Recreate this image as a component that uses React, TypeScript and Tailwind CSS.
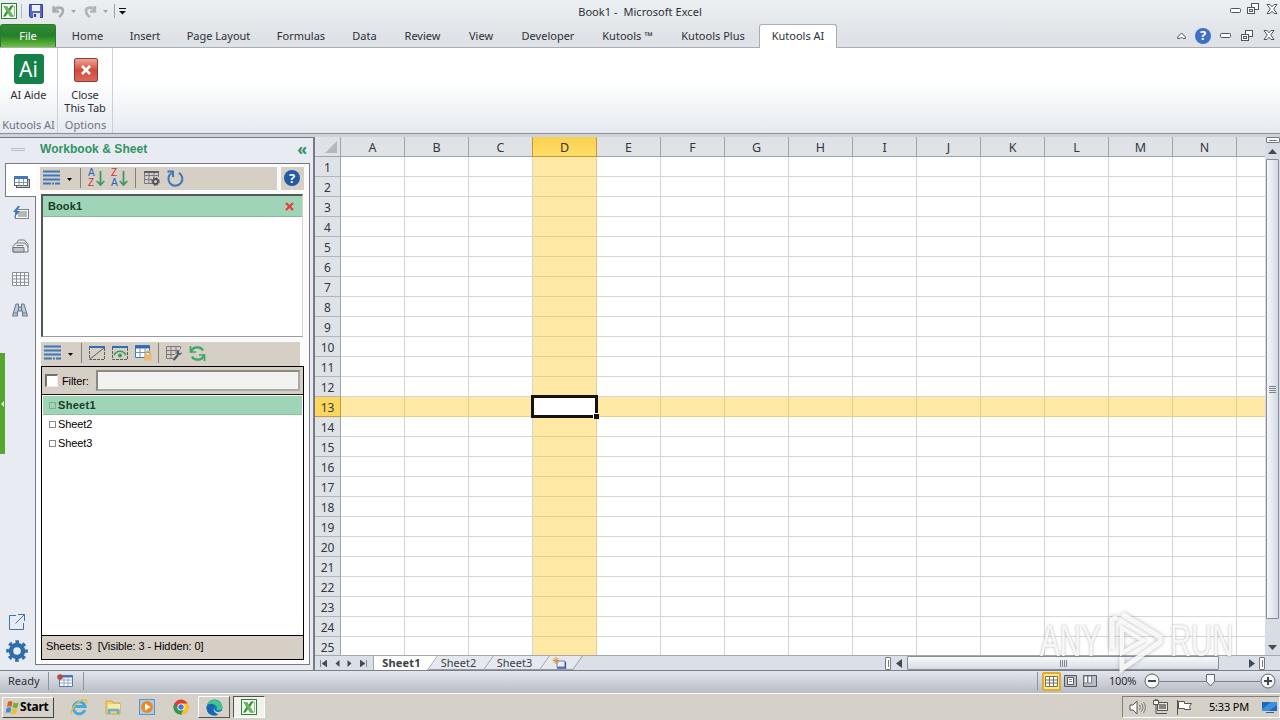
import type { ReactNode } from "react";
import clsx from "clsx";

const TABS = [
  { label: "Home", width: "w-[59px]" },
  { label: "Insert", width: "w-[56px]" },
  { label: "Page Layout", width: "w-[91px]" },
  { label: "Formulas", width: "w-[74px]" },
  { label: "Data", width: "w-[53px]" },
  { label: "Review", width: "w-[63px]" },
  { label: "View", width: "w-[54px]" },
  { label: "Developer", width: "w-[80px]" },
  { label: "Kutools ™", width: "w-[79px]" },
  { label: "Kutools Plus", width: "w-[92px]" },
  { label: "Kutools AI", width: "w-[78px]", active: true },
];

const COLUMNS = "ABCDEFGHIJKLMN".split("");
const ROWS = Array.from({ length: 25 }, (_, i) => i + 1);
const ACTIVE_COL = "D";
const ACTIVE_ROW = 13;

type IconProps = {
  w: number;
  h: number;
  className?: string;
  children: ReactNode;
};

function Icon({ w, h, className, children }: IconProps) {
  return (
    <svg
      width={w}
      height={h}
      viewBox={`0 0 ${w} ${h}`}
      fill="none"
      className={clsx("shrink-0", className)}
    >
      {children}
    </svg>
  );
}

function ExcelIcon() {
  return (
    <Icon w={16} h={16}>
      <rect x=".5" y=".5" width="15" height="15" fill="#f4faf0" stroke="#2f7d3a" />
      <path d="M11 3h2.500v10H11" stroke="#8ebf86" />
      <path d="M2.500 3H6l1.500 3L10 2.500h2.500L9 8l3.500 5.500H9L7 10l-2.500 3.500H2L5.500 8z" fill="#2f8d3b" />
      <path d="M2.500 3H6l6.500 10.500H9z" fill="#6cb75c" />
    </Icon>
  );
}

function Caret({ className }: { className?: string }) {
  return (
    <Icon w={5} h={3} className={className}>
      <path d="M0 0h5L2.500 3z" fill="currentColor" />
    </Icon>
  );
}

function MinimizeIcon() {
  return (
    <Icon w={11} h={6}>
      <rect x=".5" y=".5" width="10" height="4" rx="1" fill="#fff" stroke="#50565e" />
    </Icon>
  );
}

function RestoreIcon() {
  return (
    <Icon w={13} h={12}>
      <rect x="4.500" y=".5" width="7" height="6" fill="#fff" stroke="#50565e" />
      <rect x=".5" y="4.500" width="7" height="6" fill="#fff" stroke="#50565e" />
      <rect x="2.500" y="6.500" width="3" height="2" stroke="#50565e" />
    </Icon>
  );
}

function CloseIcon() {
  return (
    <Icon w={12} h={10}>
      <path
        d="M1 .5h3l2 2.300L8 .5h3L7.700 5 11 9.500H8L6 7.200 4 9.500H1L4.300 5z"
        fill="#fff"
        stroke="#50565e"
      />
    </Icon>
  );
}

function TitleBar() {
  return (
    <div className="flex h-6 shrink-0">
      <div className="flex w-[560px] items-center pb-0.5 pl-[1px]">
        <ExcelIcon />
        <div className="ml-1 h-3.5 w-px bg-[#b4b8bd]" />
        <Icon w={14} h={14} className="ml-[7px]">
          <path d="M.5.5h13v13h-12l-1-1z" fill="#5a66c4" stroke="#323c93" />
          <rect x="3" y="1" width="8" height="6" fill="#eef3fb" />
          <rect x="4" y="9" width="7" height="5" fill="#dfe4f0" />
          <rect x="5" y="10" width="2" height="3" fill="#323c93" />
        </Icon>
        <Icon w={13} h={13} className="ml-[9px]">
          <path d="M1.500 1v5.500H7" stroke="#a9adb3" strokeWidth="2.400" />
          <path d="M2 6c2-5 9-4 9 0 0 3-2 4-4 6" stroke="#a9adb3" strokeWidth="2.600" />
        </Icon>
        <Caret className="ml-1.5 text-[#a0a4aa]" />
        <Icon w={13} h={13} className="ml-[8px]">
          <path d="M11 1v5.500H6" stroke="#b1b5ba" strokeWidth="2.400" />
          <path d="M10.500 6C9 1 2 2 2 6c0 3 1 4 4 6" stroke="#b1b5ba" strokeWidth="2.600" />
        </Icon>
        <Caret className="ml-[6px] text-[#a0a4aa]" />
        <div className="ml-[6px] h-3.5 w-px bg-[#9da1a6]" />
        <Icon w={7} h={7} className="ml-[4px]">
          <path d="M0 .5h7" stroke="#111" />
          <path d="M0 3h7L3.500 6.500z" fill="#111" />
        </Icon>
      </div>
      <div className="w-[160px] text-center text-[11px] leading-6 tracking-[0.05px] whitespace-pre">
        {"Book1 -  Microsoft Excel"}
      </div>
      <div className="flex flex-1 items-start justify-end pr-[2px]">
        <div className="mt-2 mr-[6px]">
          <MinimizeIcon />
        </div>
        <div className="mt-[3px] mr-[6px]">
          <RestoreIcon />
        </div>
        <div className="mt-1">
          <CloseIcon />
        </div>
      </div>
    </div>
  );
}

function TabStrip() {
  return (
    <div className="flex h-6 shrink-0 border-b border-[#a9adb4] text-[11px]">
      <div className="mr-0.5 h-[23px] w-14 rounded-t-[3px] border border-b-0 border-[#2b7a2b] bg-gradient-to-b from-[#2f8c33] via-[#23802a] to-[#6cc43c] text-center leading-[22px] text-white">
        File
      </div>
      {TABS.map((tab) => (
        <div
          key={tab.label}
          className={clsx(
            "text-center leading-6 whitespace-nowrap",
            tab.width,
            tab.active &&
              "h-6 rounded-t-[3px] border border-b-0 border-[#a9adb4] bg-white leading-[22px]",
          )}
        >
          {tab.label}
        </div>
      ))}
      <div className="flex flex-1 items-center justify-end pr-[5px]">
        <Icon w={9} h={8} className="mr-[9px]">
          <path d="M.7 5 4.500 1l3.800 4v1.500H6L4.500 5 3 6.500H.7z" fill="#fff" stroke="#50565e" />
        </Icon>
        <div className="mr-[9px] flex size-4 items-center justify-center rounded-full bg-[#3f70c5] text-[13px] leading-none font-bold text-white">
          ?
        </div>
        <MinimizeIcon />
        <div className="ml-[10px]">
          <RestoreIcon />
        </div>
        <div className="ml-[9px] pb-0.5">
          <CloseIcon />
        </div>
      </div>
    </div>
  );
}

function Ribbon() {
  return (
    <div className="flex h-[86px] shrink-0 border-b border-[#8a8e95] bg-gradient-to-b from-white from-40% to-[#e6eaf0] text-[11px] leading-[13px]">
      <div className="flex w-[58px] flex-col items-center border-r border-[#cbd0d7] pt-1.5">
        <div className="flex size-[30px] items-center justify-center rounded-[3px] bg-[#15814a] text-[21px] leading-none text-white">
          Ai
        </div>
        <div className="mt-[4px] tracking-[-0.1px]">AI Aide</div>
        <div className="mt-auto mb-0.5 text-[#6b727c] whitespace-nowrap">Kutools AI</div>
      </div>
      <div className="flex w-[55px] flex-col items-center border-r border-[#cbd0d7] pt-2.5">
        <div className="ml-px flex size-6 items-center justify-center rounded-[2px] border border-[#8f3a32] bg-gradient-to-b from-[#eca59b] via-[#cf4b3c] to-[#d9695b]">
          <Icon w={12} h={12}>
            <path d="m2 2 8 8m0-8-8 8" stroke="#fff" strokeWidth="2.600" />
          </Icon>
        </div>
        <div className="mt-[6px] text-center tracking-[-0.1px] whitespace-nowrap">
          Close
          <br />
          This Tab
        </div>
        <div className="mt-auto mb-0.5 ml-px tracking-[0.1px] text-[#6b727c]">Options</div>
      </div>
    </div>
  );
}

function ListIcon() {
  return (
    <Icon w={17} h={16}>
      <path d="M0 1.500h17M0 5.500h17M0 9.500h17" stroke="#3f78b5" strokeWidth="2" />
      <path d="M0 13.500h17" stroke="#3f78b5" strokeWidth="2" strokeDasharray="8 1 2 1" />
    </Icon>
  );
}

function SortIcon({ top, bottom }: { top: string; bottom: string }) {
  const color = (letter: string) =>
    letter === "A" ? "text-[#2266bd]" : "text-[#d3302b]";
  return (
    <div className="flex items-center">
      <div className="w-[8px] font-['Liberation_Sans',Arial,sans-serif] text-[10px] leading-[10px]">
        <div className={color(top)}>{top}</div>
        <div className={color(bottom)}>{bottom}</div>
      </div>
      <Icon w={9} h={17}>
        <path d="M4.500 1v14M.8 11l3.700 4 3.700-4" stroke="#3a9b63" strokeWidth="1.800" />
      </Icon>
    </div>
  );
}

function Divider() {
  return <div className="h-5 w-px bg-[#85817a]" />;
}

function NavRail() {
  return (
    <div className="flex w-[31px] shrink-0 flex-col items-center">
      <div className="flex h-[34px] w-full shrink-0 items-center justify-center border border-r-0 border-[#777b81] bg-white pt-[5px] pl-[2px]">
        <Icon w={16} h={14}>
          <rect x="2.500" y="3.500" width="13" height="8" fill="#c9cdd2" stroke="#555b63" />
          <rect x=".5" y=".5" width="13" height="9" fill="#fff" stroke="#50657e" />
          <rect x="0" y="0" width="14" height="3" fill="#3f78bd" />
          <path d="M.5 6.500h13M5 3v7M9.500 3v7" stroke="#8793a3" />
        </Icon>
      </div>
      <div className="flex w-full flex-1 flex-col items-center border-r border-[#777b81]">
        <Icon w={17} h={14} className="mt-[9px] ml-px">
          <rect x="3.500" y="3.500" width="13" height="9" fill="#fff" stroke="#7a808a" />
          <rect x="6" y="5" width="9" height="6" fill="#b4b8be" />
          <path d="M6 0 1 6h3l-2 6 6-7H5l3-5z" fill="#3f78bd" />
        </Icon>
        <Icon w={17} h={14} className="mt-[19px] ml-px">
          <path d="M1 7.500 4 4h9l3 4v5H1zM5 3.500 6.500 1h6L16 5.500v3" fill="#eceef1" stroke="#70767f" />
          <path d="M1 8.500h11V13H1z" fill="#bfc3c9" stroke="#70767f" />
          <path d="M4.500 6.500h7" stroke="#70767f" />
        </Icon>
        <Icon w={17} h={14} className="mt-[19px] ml-px">
          <path
            d="M.5.5h16v13H.5zM.5 3.700h16M.5 7h16M.5 10.300h16M4.500.5v13M8.500.5v13M12.500.5v13"
            fill="#fff"
            stroke="#8b9097"
          />
        </Icon>
        <Icon w={16} h={14} className="mt-[17px]">
          <path
            d="M4 1h2.500v3h3V1H12l3.500 12h-5V8h-5v5H.5z"
            fill="#b6cbe0"
            stroke="#6c7681"
          />
          <path d="M6.500 4v4M9.500 4v4M1 10h4.500M10.500 10H15" stroke="#6c7681" />
        </Icon>
        <Icon w={18} h={18} className="mt-auto mr-[7px]">
          <path d="M8 2.500H1.500v14h14V10M10 1.500h6.500V8M16.500 1.500l-9 9" stroke="#3e73ab" />
        </Icon>
        <Icon w={22} h={22} className="mt-[9px] mr-[7px] mb-[3px]">
          <circle cx="11" cy="11" r="6" stroke="#2f6cac" strokeWidth="4.500" />
          <circle
            cx="11"
            cy="11"
            r="9.300"
            stroke="#2f6cac"
            strokeWidth="3"
            strokeDasharray="3.650 3.650"
            strokeDashoffset="1.820"
          />
        </Icon>
      </div>
    </div>
  );
}

function WorkbookList() {
  return (
    <>
      <div className="flex justify-between">
        <div className="flex h-[23px] w-[237px] items-center bg-[#d5cfc6] pb-px pl-[3px]">
          <ListIcon />
          <Caret className="mt-0.5 mr-[8px] ml-[7px] text-black" />
          <Divider />
          <div className="ml-[7px]">
            <SortIcon top="A" bottom="Z" />
          </div>
          <div className="mr-[7px] ml-[6px]">
            <SortIcon top="Z" bottom="A" />
          </div>
          <Divider />
          <Icon w={16} h={15} className="ml-[8px]">
            <path d="M8 12.500H.5v-12h14V6M.5 4.500h14M.5 8.500H8M5 1v11M10 1v6" stroke="#777b80" />
            <path d="M0 1h15" stroke="#5b5f64" strokeWidth="2" />
            <circle cx="11.500" cy="10.500" r="2.500" stroke="#4b4e52" strokeWidth="1.800" />
            <circle cx="11.500" cy="10.500" r="3.900" stroke="#4b4e52" strokeDasharray="1.500 1.560" />
          </Icon>
          <Icon w={17} h={17} className="ml-[7px]">
            <path d="M4.500 3A7 7 0 1 0 12 2.800" stroke="#3d77bb" strokeWidth="2" />
            <path d="M.5 1.500h5.500v5.500" stroke="#3d77bb" strokeWidth="2" />
          </Icon>
        </div>
        <div className="flex h-[23px] w-[23px] items-center justify-center bg-[#d5cfc6] pr-px pb-px">
          <div className="flex size-4 items-center justify-center rounded-full bg-[#215ca5] text-[13px] leading-none font-bold text-white">
            ?
          </div>
        </div>
      </div>
      <div className="mt-1 ml-px h-[143px] w-[262px] border-t-2 border-r border-b border-l-2 border-t-[#55585a] border-r-[#d6d3cd] border-b-[#9c9c9c] border-l-[#55585a] bg-white">
        <div className="flex h-[21px] items-center justify-between border-b border-[#86b79c] bg-[#9fd5b6] pr-[8px] pl-[5px] font-['Liberation_Sans',Arial,sans-serif] text-[11px] font-bold text-[#173c2b]">
          <span className="tracking-[0.1px]">Book1</span>
          <Icon w={9} h={9}>
            <path d="m1 1 7 7m0-7L1 8" stroke="#f03a38" strokeWidth="2.200" />
          </Icon>
        </div>
      </div>
    </>
  );
}

function SheetList() {
  const sheets = ["Sheet1", "Sheet2", "Sheet3"];
  return (
    <>
      <div className="mt-[5px] ml-px flex h-6 w-[259px] items-center bg-[#d5cfc6] pb-0.5 pl-[3px]">
        <ListIcon />
        <Caret className="mt-0.5 mr-[8px] ml-[7px] text-black" />
        <Divider />
        <Icon w={16} h={14} className="ml-[7px]">
          <path d="M.5 1v12.500h15V1" stroke="#5b5f64" strokeDasharray="3 1" />
          <path d="M0 1h16" stroke="#2f6cb5" strokeWidth="2" />
          <path d="m1 13 14-11" stroke="#5b5f64" />
        </Icon>
        <Icon w={16} h={14} className="ml-[7px]">
          <path d="M.5 1v12.500h15V1" stroke="#5b5f64" strokeDasharray="3 1" />
          <path d="M0 1h16" stroke="#2f6cb5" strokeWidth="2" />
          <path d="M2 9c3-5 9-5 12 0" stroke="#3a9b63" strokeWidth="1.500" />
          <circle cx="8" cy="9.500" r="2" fill="#3a9b63" />
        </Icon>
        <Icon w={17} h={16} className="ml-[7px]">
          <path d="M.5.5h14v12H.5z" fill="#fff" stroke="#3f78bd" />
          <path d="M0 2h15" stroke="#2f6cb5" strokeWidth="3" />
          <path d="M.5 7.500h14M5 3v9M10 3v9" stroke="#6f94c2" />
          <path d="M11 10V8a2 2 0 0 1 4 0v2" stroke="#e5ad5b" strokeWidth="1.500" />
          <rect x="9.500" y="9.500" width="7" height="6" fill="#ecb96e" />
        </Icon>
        <div className="mr-[7px] ml-[6px]">
          <Divider />
        </div>
        <Icon w={17} h={15}>
          <path d="M7 12.500H.5V.5h14V3M.5 4.500h11M.5 8.500H9M5 .5v12M10 .5V8" stroke="#777b80" />
          <path d="m7.500 14 4.500-5" stroke="#54585d" strokeWidth="2.200" />
          <path d="m16 6-2 1.500-1.500-1.500L14 4c-3-.5-4 2-3 4.500 2.500 1.500 5 0 5-2.500z" fill="#54585d" />
        </Icon>
        <Icon w={17} h={17} className="ml-[6px]">
          <path d="M2 7.500C3 1 12 1 14 5.500M15 9.500C14 16 5 16 3 11.500" stroke="#3aa76b" strokeWidth="2.200" />
          <path d="M1.500 1v6H7M15.500 16v-6H10" stroke="#3aa76b" strokeWidth="1.700" />
        </Icon>
      </div>
      <div className="ml-px flex h-[294px] w-[263px] flex-col border border-black bg-white font-['Liberation_Sans',Arial,sans-serif] text-[11px] text-black">
        <div className="flex h-7 items-center border-b border-[#161616] bg-[#d5cfc6] pl-[3px]">
          <div className="size-[13px] border-t-2 border-r border-b border-l-2 border-[#74726e] border-r-[#eceae6] border-b-[#eceae6] bg-white" />
          <span className="ml-[4px] w-[29px] pt-px tracking-[-0.1px]">Filter:</span>
          <div className="ml-[5px] h-[21px] w-[204px] border-2 border-[#8a8985] border-r-[#a9a8a4] border-b-[#a9a8a4] bg-[#f2f2f0]" />
        </div>
        {sheets.map((name, i) => (
          <div
            key={name}
            className={clsx(
              "flex h-[19px] items-center pl-[6px]",
              i === 0 &&
                "mx-px mt-px border-b border-[#8abf9f] bg-[#9fd5b6] font-bold text-[#173c2b]",
              i > 0 && "ml-px",
            )}
          >
            <span
              className={clsx(
                "mr-[2px] size-[7px] border",
                i === 0 ? "border-[#7fae93]" : "border-[#8a8a8a]",
              )}
            />
            <span className={i === 0 ? "tracking-[0.3px]" : "tracking-[-0.1px]"}>{name}</span>
          </div>
        ))}
        <div className="mt-auto h-[24px] border-t border-black bg-[#d5cfc6] pl-1 leading-[21px] tracking-[-0.07px] whitespace-pre">
          {"Sheets: 3  [Visible: 3 - Hidden: 0]"}
        </div>
      </div>
    </>
  );
}

function SidePane() {
  return (
    <div className="relative flex w-[315px] shrink-0 flex-col border-t border-r-2 border-[#777b81] bg-[#e8ebf2]">
      <div className="flex h-[25px] shrink-0 items-start pt-[4px] pr-[6px] pl-[11px]">
        <div className="mt-[6px] h-[3px] w-[14px] border-y border-[#b9bdc4]" />
        <span className="ml-[15px] font-['Liberation_Sans',Arial,sans-serif] text-[12px] leading-[15px] font-bold tracking-[0.05px] text-[#2e9463]">
          Workbook &amp; Sheet
        </span>
        <span className="ml-auto text-[16px] leading-[14px] font-bold text-[#2e9463]">«</span>
      </div>
      <div className="ml-[5px] flex h-[502px]">
        <NavRail />
        <div className="w-[274px] border-t border-r border-b border-[#777b81] bg-[#fbfbfc] pt-[3px] pr-[5px] pl-1">
          <WorkbookList />
          <SheetList />
        </div>
      </div>
      <div className="absolute top-[215px] left-0 flex h-[101px] w-[5px] items-center bg-[#55a630]">
        <Icon w={4} h={6}>
          <path d="M4 0v6L1 3z" fill="#d7efc8" />
        </Icon>
      </div>
    </div>
  );
}

function ColumnHeaders() {
  return (
    <div className="flex h-5 shrink-0 text-[12.500px] leading-[21px] text-[#33373c]">
      <div className="flex w-[26px] items-end justify-end border-r border-b border-[#9ea4ad] bg-[#dfe3e8] pr-[3px] pb-[3px]">
        <Icon w={12} h={12}>
          <path d="M12 0v12H0z" fill="#b4b9c0" />
        </Icon>
      </div>
      {COLUMNS.map((col) => (
        <div
          key={col}
          className={clsx(
            "w-16 shrink-0 border-r border-b text-center",
            col === ACTIVE_COL
              ? "border-[#c29a3c] bg-gradient-to-b from-[#fbd04e] to-[#fede69]"
              : "border-[#9ea4ad] bg-[#dfe3e8]",
            col === "C" && "border-r-[#c29a3c]",
          )}
        >
          {col}
        </div>
      ))}
      <div className="flex-1 border-b border-[#9ea4ad] bg-[#dfe3e8]" />
    </div>
  );
}

function GridRow({ row }: { row: number }) {
  const activeRow = row === ACTIVE_ROW;
  return (
    <div className="flex h-5 shrink-0">
      <div
        className={clsx(
          "w-[26px] shrink-0 border-r border-b text-center text-[12px] leading-[21px] text-[#33373c]",
          activeRow
            ? "border-[#c29a3c] bg-[#fdd75d]"
            : "border-[#b1b6be] border-r-[#9ea4ad] bg-[#dfe3e8]",
        )}
      >
        {row}
      </div>
      {COLUMNS.map((col) => (
        <div
          key={col}
          className={clsx(
            "w-16 shrink-0 border-r border-b",
            activeRow || col === ACTIVE_COL
              ? "border-[#e3cf95] bg-[#fee8a3]"
              : "border-[#d4d6d9] bg-white",
          )}
        />
      ))}
      <div
        className={clsx(
          "flex-1 border-b",
          activeRow ? "border-[#e3cf95] bg-[#fee8a3]" : "border-[#d4d6d9] bg-white",
        )}
      />
    </div>
  );
}

function SheetTab({ width, children }: { width: string; children: ReactNode }) {
  return (
    <div
      className={clsx(
        "h-[14px] shrink-0 -skew-x-[35deg] border-r border-b border-[#969ca5] bg-[#e5e9ef]",
        width,
      )}
    >
      <div className="flex h-[14px] skew-x-[35deg] items-center justify-center pr-[4px]">
        {children}
      </div>
    </div>
  );
}

function SheetBar() {
  return (
    <div className="flex h-[15px] shrink-0 overflow-hidden border-t border-[#a3a9b2] bg-[#dbdfe7] text-[11px] text-[#3a3f45]">
      <div className="flex w-[59px] shrink-0 items-center justify-between border-r border-[#a3a9b2] pr-[6px] pl-[5px]">
        <Icon w={7} h={7}>
          <path d="M.5 0v7M7 0v7L2 3.500z" fill="#444a52" stroke="#444a52" strokeWidth=".6" />
        </Icon>
        <Icon w={5} h={7}>
          <path d="M4.500 0v7L.5 3.500z" fill="#444a52" />
        </Icon>
        <Icon w={5} h={7}>
          <path d="M.5 0v7l4-3.500z" fill="#444a52" />
        </Icon>
        <Icon w={7} h={7}>
          <path d="M6.500 0v7M0 0v7l5-3.500z" fill="#444a52" stroke="#444a52" strokeWidth=".6" />
        </Icon>
      </div>
      <div className="flex w-[511px] shrink-0">
        <div className="h-[14px] w-5 shrink-0 bg-white" />
        <div className="-ml-3 h-[14px] w-[51px] shrink-0 -skew-x-[35deg] border-r border-[#969ca5] bg-white">
          <div className="flex h-[14px] skew-x-[35deg] items-center justify-center pr-[11px] font-bold tracking-[0.2px]">
            Sheet1
          </div>
        </div>
        <SheetTab width="w-[56px]">Sheet2</SheetTab>
        <SheetTab width="w-[56px]">Sheet3</SheetTab>
        <SheetTab width="w-[33px]">
          <Icon w={15} h={12}>
            <path d="M5 4h8v6H5z" fill="#e9eefa" stroke="#6b7fb5" />
            <path d="M5 11h8.500V5" stroke="#3c55a1" strokeWidth="1.300" />
            <path d="M4 0v7M.5 3.500h7M1.500 1l5 5M6.500 1l-5 5" stroke="#e0912e" />
          </Icon>
        </SheetTab>
      </div>
      <div className="flex flex-1 items-center">
        <div className="flex h-[13px] w-[6px] items-center justify-center rounded-[1px] border border-[#747a84] bg-white">
          <div className="h-[7px] w-px bg-[#747a84]" />
        </div>
        <Icon w={6} h={9} className="ml-[5px]">
          <path d="M6 0v9L0 4.500z" fill="#444a52" />
        </Icon>
        <div className="ml-[5px] flex h-[14px] w-[312px] items-center justify-center gap-px rounded-[1px] border border-[#868d99] bg-gradient-to-b from-[#f8f9fb] to-[#d8dce5]">
          {[0, 1, 2, 3].map((i) => (
            <div key={i} className="h-[7px] w-px bg-[#7d848e]" />
          ))}
        </div>
        <Icon w={6} h={9} className="ml-auto">
          <path d="M0 0v9l6-4.500z" fill="#444a52" />
        </Icon>
        <div className="mr-[15px] ml-[4px] flex h-[13px] w-[6px] items-center justify-center rounded-[1px] border border-[#747a84] bg-white">
          <div className="h-[7px] w-px bg-[#747a84]" />
        </div>
      </div>
    </div>
  );
}

function VerticalScroll() {
  return (
    <div className="flex w-[15px] shrink-0 flex-col items-center bg-[#d7dce5]">
      <div className="flex h-[6px] w-[14px] items-center justify-center self-end rounded-[1px] border border-[#747a84] bg-white">
        <div className="h-px w-2 bg-[#747a84]" />
      </div>
      <Icon w={9} h={5} className="mt-[6px]">
        <path d="M0 5h9L4.500 0z" fill="#444a52" />
      </Icon>
      <div className="mt-[5px] flex h-[460px] w-[13px] flex-col items-center justify-center gap-px rounded-[1px] border border-[#868d99] bg-gradient-to-r from-[#f6f7fa] to-[#d3d8e2]">
        {[0, 1, 2, 3].map((i) => (
          <div key={i} className="h-px w-[7px] bg-[#7d848e]" />
        ))}
      </div>
      <Icon w={9} h={5} className="mt-auto mb-[5px]">
        <path d="M0 0h9L4.500 5z" fill="#444a52" />
      </Icon>
    </div>
  );
}

function Watermark() {
  return (
    <div className="pointer-events-none absolute right-[44px] bottom-[-3px] flex h-[64px] w-[196px] items-center justify-between text-[45px] leading-none text-white/85 [text-shadow:0_0_3px_rgba(110,110,110,0.55)]">
      <div className="w-[64px] origin-left scale-x-[0.66] pb-0.5 font-['Liberation_Sans',Arial,sans-serif]">
        ANY
      </div>
      <Icon w={58} h={64} className="overflow-visible drop-shadow-[0_0_2px_rgba(110,110,110,0.6)]">
        <path d="M4 40V11l5-3M14 5 52 28v5L14 60V48" stroke="#fff" strokeOpacity=".85" strokeWidth="5" />
        <path d="M14 19v25l21-12.500z" stroke="#fff" strokeOpacity=".85" strokeWidth="4" />
      </Icon>
      <div className="w-[66px] origin-left scale-x-[0.65] pb-0.5 font-['Liberation_Sans',Arial,sans-serif]">
        RUN
      </div>
    </div>
  );
}

function Worksheet() {
  return (
    <div className="relative flex flex-1 flex-col">
      <div className="flex h-[518px]">
        <div className="relative flex flex-1 flex-col overflow-hidden">
          <ColumnHeaders />
          {ROWS.map((row) => (
            <GridRow key={row} row={row} />
          ))}
          {/* active cell outline with its fill handle */}
          <div className="absolute top-[258px] left-[216px] h-[23px] w-[67px] border-3 border-[#14140c] bg-white">
            <div className="absolute -right-[4px] -bottom-[4px] size-[6px] border-t border-l border-white bg-[#14140c]" />
          </div>
        </div>
        <VerticalScroll />
      </div>
      <SheetBar />
      <Watermark />
    </div>
  );
}

function StatusBar() {
  return (
    <div className="flex h-6 shrink-0 items-center border-t border-b border-t-[#7b8087] border-b-white bg-gradient-to-b from-[#e3e6ec] to-[#b7bbc4] pb-0.5 text-[11px]">
      <span className="w-[48px] pl-2">Ready</span>
      <div className="h-[18px] w-px bg-[#8f949c]" />
      <Icon w={16} h={14} className="mr-[9px] ml-[8px]">
        <path d="M2.500 1.500h13v11h-13z" fill="#fff" stroke="#5579b8" />
        <path d="M2 2.500h13" stroke="#4a72b9" strokeWidth="2" />
        <path d="M3 6h12M3 9h12M7 3v9M11 3v9" stroke="#8ea8d5" />
        <circle cx="3" cy="3" r="2.800" fill="#b64c3a" />
      </Icon>
      <div className="ml-px h-[18px] w-px bg-[#8f949c]" />
      <div className="ml-auto h-[18px] w-px bg-[#8f949c]" />
      <div className="ml-1 flex h-[19px] w-[19px] items-center justify-center rounded-[2px] border-2 border-[#dfac2f] bg-[#ffe68a]">
        <Icon w={13} h={11}>
          <path d="M.5.5h12v10H.5zM.5 4h12M.5 7h12M4.500.5v10M8.500.5v10" fill="#fff" stroke="#77715a" />
        </Icon>
      </div>
      <Icon w={13} h={12} className="ml-[3px]">
        <path d="M.5.5h12v11H.5z" fill="#b9bdc3" stroke="#565b62" />
        <path d="M3.500 2.500h6v7h-6z" fill="#fff" stroke="#565b62" />
        <path d="M5 4.500h3M5 6.500h3" stroke="#8a8f96" />
      </Icon>
      <Icon w={14} h={12} className="ml-[6px]">
        <path d="M.5.5h13v11H.5z" fill="#b9bdc3" stroke="#565b62" />
        <path d="M1 1h3.500v7H1zM5 1h3.500v7H5z" fill="#fff" stroke="#777c83" />
      </Icon>
      <span className="ml-3 w-[28px] tracking-[-0.2px]">100%</span>
      <Icon w={16} h={16} className="ml-[7px]">
        <circle cx="8" cy="8" r="7" fill="#f4f5f7" stroke="#60656d" />
        <path d="M4 8h8" stroke="#42474e" strokeWidth="2" />
      </Icon>
      <div className="relative h-px w-[100px] bg-[#7c8189]">
        <Icon w={10} h={13} className="absolute -top-[7px] left-[46px]">
          <path d="M.5.5h8v7L4.500 12l-4-4.500z" fill="#f7f8f9" stroke="#60656d" />
        </Icon>
      </div>
      <Icon w={16} h={16} className="mr-1">
        <circle cx="8" cy="8" r="7" fill="#f4f5f7" stroke="#60656d" />
        <path d="M4 8h8M8 4v8" stroke="#42474e" strokeWidth="2" />
      </Icon>
    </div>
  );
}

function Taskbar() {
  return (
    <div className="flex h-[26px] shrink-0 items-center bg-[#d5d0c8] text-black">
      <div className="ml-[2px] flex h-[21px] w-[52px] items-center border border-t-white border-r-[#45433f] border-b-[#45433f] border-l-white pl-[2px]">
        <Icon w={15} h={15}>
          <path d="M3 2c2-1.500 3-1 4.500 0L6.500 7C5 6 4 6 2 7z" fill="#e2582a" />
          <path d="M8.500 2.500c2 1 3 .8 5 0L12.500 7.500c-2 1-3 .8-5 0z" fill="#6eb43c" />
          <path d="M1.700 8c2-1 3-1 4.500 0l-1 5C4 12 2.500 12 .5 13z" fill="#3a8bd6" />
          <path d="M7.200 8.500c2 1 3 .8 5 0l-1 5c-2 1-3 .8-5 0z" fill="#f0bd2f" />
        </Icon>
        <span className="text-[12px] font-bold tracking-[-0.2px]">Start</span>
      </div>
      <Icon w={18} h={18} className="ml-[16px]">
        <path d="M15 12a6 6 0 1 1 .2-3.500H5" stroke="#45a9e0" strokeWidth="2.800" />
        <path d="M2 16C-1 13 9 0 16 2c1.500.7.500 3-.5 4" stroke="#e6bc3a" strokeWidth="1.500" />
      </Icon>
      <Icon w={17} h={16} className="ml-[17px]">
        <path d="M1 2h6l1 2h7v11H1z" fill="#f1cf6e" stroke="#d1a843" />
        <path d="M3 5h12v6H3z" fill="#fae9a9" />
        <path d="M4 15v-4h9v4" stroke="#65b1d9" strokeWidth="2.500" />
      </Icon>
      <Icon w={16} h={16} className="ml-[17px]">
        <rect x=".5" y=".5" width="15" height="15" fill="#a6cdf0" stroke="#5b94c8" />
        <circle cx="8" cy="8" r="6" fill="#ee8921" />
        <path d="M6 4.500v7L11.500 8z" fill="#fff" />
      </Icon>
      <Icon w={16} h={16} className="ml-[18px]">
        <circle cx="8" cy="8" r="7.500" fill="#e33b2e" />
        <path d="M1.500 4.200A7.500 7.500 0 0 0 8 15.500L11 9.500 5 9.500z" fill="#2c9d49" />
        <path d="M8 4.500h6.600A7.500 7.500 0 0 1 8 15.500l3.200-6z" fill="#fbc71c" />
        <circle cx="8" cy="8" r="3.600" fill="#fff" />
        <circle cx="8" cy="8" r="2.700" fill="#3f7be0" />
      </Icon>
      <div className="ml-[9px] flex h-[22px] w-[32px] items-center justify-center border border-t-white border-r-[#55534f] border-b-[#55534f] border-l-white">
        <Icon w={17} h={17}>
          <circle cx="8.500" cy="8.500" r="8" fill="#1778c8" />
          <path d="M1 6C3-1 15-1 16.500 8c0 4-5 4-6 2 1-2 0-4-3-4-3 0-5 0-6.500 2z" fill="#45c58c" />
          <path d="M8 9.500c0 3 4 4.500 7.500 2.500l1.500 1-3 4C10 16 6 13 8 9.500z" fill="#d5d0c8" />
          <path d="M.5 8c1-4 7-4 9-1-3 0-4 6 3 8.500C5 18.500.5 14 .5 8z" fill="#1668b6" />
        </Icon>
      </div>
      <div className="ml-[3px] flex h-[22px] w-[32px] items-center justify-center border border-t-[#55534f] border-r-white border-b-white border-l-[#55534f] bg-[#f3f1ee]">
        <ExcelIcon />
      </div>
      <div className="ml-auto flex h-[22px] w-[158px] items-center border border-t-[#83807a] border-r-white border-b-white border-l-[#83807a] pl-[6px]">
        <Icon w={17} h={15}>
          <path d="M1 5h3l4-4v13l-4-4H1z" fill="#fff" stroke="#55534f" />
          <path d="M10.500 5c1 2 1 3 0 5M12.500 3.500c2 3 2 5 0 8M14.500 2c2.500 4 2.500 7 0 11" stroke="#77756f" />
        </Icon>
        <Icon w={17} h={16} className="ml-[6px]">
          <path d="M5.500 3.500h10v8h-10z" fill="#e9e7e2" stroke="#55534f" />
          <path d="M7 5h7v5H7z" fill="#85837d" />
          <path d="M1.500 1.500h5v4h-5z" fill="#fff" stroke="#55534f" />
          <path d="M4 6v8.500h11M3.500 0v2M5 0v2" stroke="#55534f" />
        </Icon>
        <Icon w={17} h={15} className="ml-[7px]">
          <path d="M1.500 0v15" stroke="#55534f" />
          <path d="M2.500 1.500h6v2h7l-2 3 1 3h-6v-1h-6z" fill="#fff" stroke="#55534f" />
        </Icon>
        <span className="ml-[16px] w-[42px] text-[11px] tracking-[-0.2px] whitespace-nowrap">
          5:33 PM
        </span>
        <Icon w={16} h={13} className="mr-px ml-auto">
          <rect x="0" y="1" width="15" height="9" fill="#1e68c0" />
          <path d="M0 8 9 1h6v3L7 10H0z" fill="#3e90de" />
          <path d="M4 11.500h8" stroke="#3b5f8a" />
        </Icon>
      </div>
    </div>
  );
}

export default function App() {
  return (
    <div className="flex h-[720px] w-[1280px] flex-col overflow-hidden bg-[#dfe3e7] bg-gradient-to-b from-[#edf0f3] to-[#dfe2e6] to-5% font-['Noto_Sans','Open_Sans',sans-serif] text-[#2c3036]">
      <TitleBar />
      <TabStrip />
      <Ribbon />
      <div className="flex h-[536px] shrink-0 bg-[#d0d4da] pt-[3px]">
        <SidePane />
        <Worksheet />
      </div>
      <StatusBar />
      <Taskbar />
    </div>
  );
}
